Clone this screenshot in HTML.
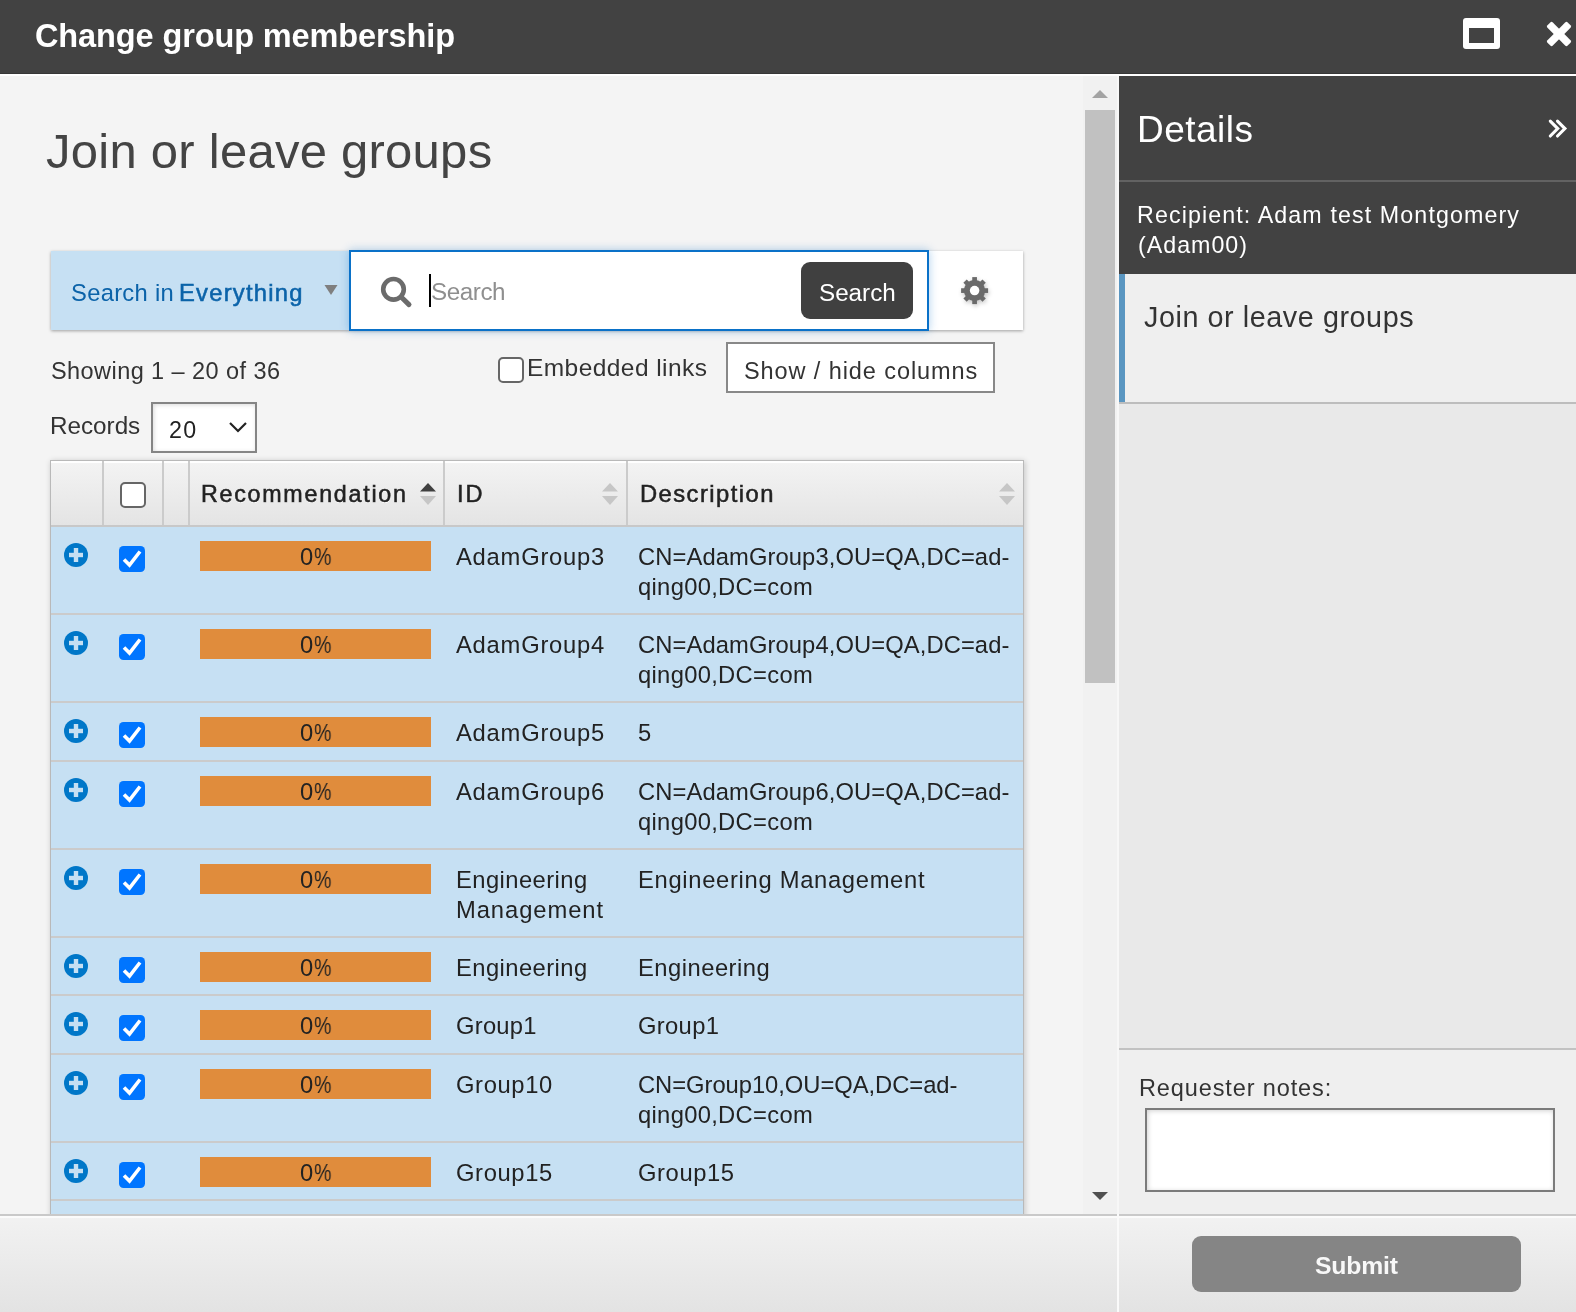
<!DOCTYPE html>
<html><head><meta charset="utf-8"><style>
*{box-sizing:border-box;margin:0;padding:0}
html,body{width:1576px;height:1312px;overflow:hidden;background:#f4f4f4;font-family:'Liberation Sans', sans-serif}
.a{position:absolute}
.tx{position:absolute;white-space:nowrap;font-family:'Liberation Sans', sans-serif;will-change:transform}
.rowt{font-size:23.75px;line-height:24px;color:#222;letter-spacing:0.000px}
</style></head><body>
<div class="a" style="left:0;top:0;width:1576px;height:74px;background:#424242"></div>
<div class="a" style="left:0;top:73px;width:1576px;height:1px;background:#373737"></div>
<div class="a" style="left:0;top:74px;width:1576px;height:2px;background:#ffffff"></div>
<div class="a" style="left:1463px;top:18px;width:37px;height:31px;border-radius:3px;background:#fff"></div>
<div class="a" style="left:1469px;top:28px;width:25px;height:15px;background:#424242"></div>
<svg class="a" style="left:1539.4px;top:14.0px" width="40" height="40" viewBox="0 0 40 40"><g transform="translate(20 20)" fill="#fff"><rect x="-14.3" y="-3.8" width="28.6" height="7.6" rx="1.8" transform="rotate(45)"/><rect x="-14.3" y="-3.8" width="28.6" height="7.6" rx="1.8" transform="rotate(-45)"/></g></svg>
<div class="a" style="left:51px;top:251px;width:972px;height:79px;background:#fff;box-shadow:0 1px 3px rgba(0,0,0,0.35)"></div>
<div class="a" style="left:51px;top:251px;width:298px;height:79px;background:#c6e0f3"></div>
<svg class="a" style="left:324px;top:285px" width="14" height="10" viewBox="0 0 14 10"><path d="M0.5 0 L13.5 0 L7 10 Z" fill="#7f7f7f"/></svg>
<div class="a" style="left:349px;top:250px;width:580px;height:81px;background:#fff;border:2px solid #0a71c8;box-shadow:0 0 9px rgba(10,110,200,0.32)"></div>
<svg class="a" style="left:378px;top:274px" width="36" height="36" viewBox="0 0 36 36"><circle cx="15.5" cy="15.3" r="10.3" fill="none" stroke="#6b6b6b" stroke-width="4.6"/><path d="M23.2 23 L31 30.6" stroke="#6b6b6b" stroke-width="5" stroke-linecap="round"/></svg>
<div class="a" style="left:429px;top:274px;width:2px;height:33px;background:#000"></div>
<div class="a" style="left:801px;top:262px;width:112px;height:57px;border-radius:9px;background:#404040"></div>
<svg class="a" style="left:958px;top:274px;filter:drop-shadow(1px 2px 2px rgba(0,0,0,0.22))" width="34" height="34" viewBox="0 0 34 34"><g transform="translate(16.6 16.6)" fill="#6a6a6a"><rect x="-2.35" y="-13.5" width="4.7" height="7" transform="rotate(0)"/><rect x="-2.35" y="-13.5" width="4.7" height="7" transform="rotate(45)"/><rect x="-2.35" y="-13.5" width="4.7" height="7" transform="rotate(90)"/><rect x="-2.35" y="-13.5" width="4.7" height="7" transform="rotate(135)"/><rect x="-2.35" y="-13.5" width="4.7" height="7" transform="rotate(180)"/><rect x="-2.35" y="-13.5" width="4.7" height="7" transform="rotate(225)"/><rect x="-2.35" y="-13.5" width="4.7" height="7" transform="rotate(270)"/><rect x="-2.35" y="-13.5" width="4.7" height="7" transform="rotate(315)"/><circle r="10.6"/><circle r="4.75" fill="#fff"/></g></svg>
<div class="a" style="left:498px;top:357px;width:26px;height:26px;border:2px solid #666;border-radius:5px;background:#fff"></div>
<div class="a" style="left:726px;top:342px;width:269px;height:51px;border:2px solid #888;background:#fff"></div>
<div class="a" style="left:151px;top:402px;width:106px;height:51px;border:2px solid #858585;background:#fff;box-shadow:inset 1px 1px 4px rgba(0,0,0,0.15)"></div>
<svg class="a" style="left:228px;top:421px" width="20" height="12" viewBox="0 0 20 12"><path d="M2 2 L10 10 L18 2" fill="none" stroke="#222" stroke-width="2.2"/></svg>
<div class="a" style="left:50px;top:460px;width:974px;height:760px;box-shadow:1px 1px 6px rgba(0,0,0,0.2);background:#c6e0f3;border:1px solid #b9b9b9;border-bottom:none"></div>
<div class="a" style="left:51px;top:461px;width:972px;height:64px;background:linear-gradient(#f3f3f3,#e4e4e4);border-top:2px solid #fff"></div>
<div class="a" style="left:51px;top:525px;width:972px;height:2px;background:#c8c8c8"></div>
<div class="a" style="left:102px;top:461px;width:2px;height:64px;background:#cbcbcb"></div>
<div class="a" style="left:162px;top:461px;width:2px;height:64px;background:#cbcbcb"></div>
<div class="a" style="left:188px;top:461px;width:2px;height:64px;background:#cbcbcb"></div>
<div class="a" style="left:443px;top:461px;width:2px;height:64px;background:#cbcbcb"></div>
<div class="a" style="left:626px;top:461px;width:2px;height:64px;background:#cbcbcb"></div>
<div class="a" style="left:120px;top:482px;width:26px;height:26px;border:2px solid #666;border-radius:5px;background:#fff"></div>
<svg class="a" style="left:419.5px;top:483px" width="16" height="22" viewBox="0 0 16 22"><path d="M0 8.5 L8 0 L16 8.5 Z" fill="#404040"/><path d="M0 13 L16 13 L8 22 Z" fill="#c6c6c6"/></svg>
<svg class="a" style="left:601.5px;top:483px" width="16" height="22" viewBox="0 0 16 22"><path d="M0 8.5 L8 0 L16 8.5 Z" fill="#c6c6c6"/><path d="M0 13 L16 13 L8 22 Z" fill="#c6c6c6"/></svg>
<svg class="a" style="left:998.5px;top:483px" width="16" height="22" viewBox="0 0 16 22"><path d="M0 8.5 L8 0 L16 8.5 Z" fill="#c6c6c6"/><path d="M0 13 L16 13 L8 22 Z" fill="#c6c6c6"/></svg>
<div class="a" style="left:51px;top:613px;width:972px;height:2px;background:#cbcbcb"></div>
<svg class="a" style="left:64px;top:543px" width="24" height="24" viewBox="0 0 24 24"><circle cx="12" cy="12" r="12" fill="#0077c8"/><rect x="5" y="9.8" width="14" height="4.4" fill="#c6e0f3"/><rect x="9.8" y="5" width="4.4" height="14" fill="#c6e0f3"/></svg>
<svg class="a" style="left:119px;top:546px" width="26" height="26" viewBox="0 0 26 26"><rect x="0" y="0" width="26" height="26" rx="4.5" fill="#0075ff"/><path d="M5 13.5 L10.5 19 L21 5.5" fill="none" stroke="#fff" stroke-width="3.6"/></svg>
<div class="a" style="left:200px;top:541px;width:231px;height:30px;background:#e08c3c"></div>
<div id="r_pct0" class="tx rowt" style="left:300.10px;top:544.80px;letter-spacing:0.000px">0</div>
<div class="tx rowt" style="left:313.80px;top:544.80px;transform:scaleX(0.823);transform-origin:0 0">%</div>
<div id="r_id0" class="tx rowt" style="left:456.30px;top:544.80px;letter-spacing:0.783px">AdamGroup3</div>
<div id="r_desc0" class="tx rowt" style="left:638.30px;top:544.80px;letter-spacing:0.098px">CN=AdamGroup3,OU=QA,DC=ad-</div>
<div class="tx rowt" style="left:638.30px;top:574.80px;letter-spacing:0.313px">qing00,DC=com</div>
<div class="a" style="left:51px;top:701px;width:972px;height:2px;background:#cbcbcb"></div>
<svg class="a" style="left:64px;top:631px" width="24" height="24" viewBox="0 0 24 24"><circle cx="12" cy="12" r="12" fill="#0077c8"/><rect x="5" y="9.8" width="14" height="4.4" fill="#c6e0f3"/><rect x="9.8" y="5" width="4.4" height="14" fill="#c6e0f3"/></svg>
<svg class="a" style="left:119px;top:634px" width="26" height="26" viewBox="0 0 26 26"><rect x="0" y="0" width="26" height="26" rx="4.5" fill="#0075ff"/><path d="M5 13.5 L10.5 19 L21 5.5" fill="none" stroke="#fff" stroke-width="3.6"/></svg>
<div class="a" style="left:200px;top:629px;width:231px;height:30px;background:#e08c3c"></div>
<div class="tx rowt" style="left:300.10px;top:632.80px;letter-spacing:0.000px">0</div>
<div class="tx rowt" style="left:313.80px;top:632.80px;transform:scaleX(0.823);transform-origin:0 0">%</div>
<div class="tx rowt" style="left:456.30px;top:632.80px;letter-spacing:0.783px">AdamGroup4</div>
<div class="tx rowt" style="left:638.30px;top:632.80px;letter-spacing:0.098px">CN=AdamGroup4,OU=QA,DC=ad-</div>
<div class="tx rowt" style="left:638.30px;top:662.80px;letter-spacing:0.313px">qing00,DC=com</div>
<div class="a" style="left:51px;top:760px;width:972px;height:2px;background:#cbcbcb"></div>
<svg class="a" style="left:64px;top:719px" width="24" height="24" viewBox="0 0 24 24"><circle cx="12" cy="12" r="12" fill="#0077c8"/><rect x="5" y="9.8" width="14" height="4.4" fill="#c6e0f3"/><rect x="9.8" y="5" width="4.4" height="14" fill="#c6e0f3"/></svg>
<svg class="a" style="left:119px;top:722px" width="26" height="26" viewBox="0 0 26 26"><rect x="0" y="0" width="26" height="26" rx="4.5" fill="#0075ff"/><path d="M5 13.5 L10.5 19 L21 5.5" fill="none" stroke="#fff" stroke-width="3.6"/></svg>
<div class="a" style="left:200px;top:717px;width:231px;height:30px;background:#e08c3c"></div>
<div class="tx rowt" style="left:300.10px;top:720.80px;letter-spacing:0.000px">0</div>
<div class="tx rowt" style="left:313.80px;top:720.80px;transform:scaleX(0.823);transform-origin:0 0">%</div>
<div class="tx rowt" style="left:456.30px;top:720.80px;letter-spacing:0.783px">AdamGroup5</div>
<div class="tx rowt" style="left:638.30px;top:720.80px;letter-spacing:0.000px">5</div>
<div class="a" style="left:51px;top:848px;width:972px;height:2px;background:#cbcbcb"></div>
<svg class="a" style="left:64px;top:778px" width="24" height="24" viewBox="0 0 24 24"><circle cx="12" cy="12" r="12" fill="#0077c8"/><rect x="5" y="9.8" width="14" height="4.4" fill="#c6e0f3"/><rect x="9.8" y="5" width="4.4" height="14" fill="#c6e0f3"/></svg>
<svg class="a" style="left:119px;top:781px" width="26" height="26" viewBox="0 0 26 26"><rect x="0" y="0" width="26" height="26" rx="4.5" fill="#0075ff"/><path d="M5 13.5 L10.5 19 L21 5.5" fill="none" stroke="#fff" stroke-width="3.6"/></svg>
<div class="a" style="left:200px;top:776px;width:231px;height:30px;background:#e08c3c"></div>
<div class="tx rowt" style="left:300.10px;top:779.80px;letter-spacing:0.000px">0</div>
<div class="tx rowt" style="left:313.80px;top:779.80px;transform:scaleX(0.823);transform-origin:0 0">%</div>
<div class="tx rowt" style="left:456.30px;top:779.80px;letter-spacing:0.783px">AdamGroup6</div>
<div class="tx rowt" style="left:638.30px;top:779.80px;letter-spacing:0.098px">CN=AdamGroup6,OU=QA,DC=ad-</div>
<div class="tx rowt" style="left:638.30px;top:809.80px;letter-spacing:0.313px">qing00,DC=com</div>
<div class="a" style="left:51px;top:936px;width:972px;height:2px;background:#cbcbcb"></div>
<svg class="a" style="left:64px;top:866px" width="24" height="24" viewBox="0 0 24 24"><circle cx="12" cy="12" r="12" fill="#0077c8"/><rect x="5" y="9.8" width="14" height="4.4" fill="#c6e0f3"/><rect x="9.8" y="5" width="4.4" height="14" fill="#c6e0f3"/></svg>
<svg class="a" style="left:119px;top:869px" width="26" height="26" viewBox="0 0 26 26"><rect x="0" y="0" width="26" height="26" rx="4.5" fill="#0075ff"/><path d="M5 13.5 L10.5 19 L21 5.5" fill="none" stroke="#fff" stroke-width="3.6"/></svg>
<div class="a" style="left:200px;top:864px;width:231px;height:30px;background:#e08c3c"></div>
<div class="tx rowt" style="left:300.10px;top:867.80px;letter-spacing:0.000px">0</div>
<div class="tx rowt" style="left:313.80px;top:867.80px;transform:scaleX(0.823);transform-origin:0 0">%</div>
<div class="tx rowt" style="left:456.30px;top:867.80px;letter-spacing:0.443px">Engineering</div>
<div class="tx rowt" style="left:456.30px;top:897.80px;letter-spacing:0.940px">Management</div>
<div class="tx rowt" style="left:638.30px;top:867.80px;letter-spacing:0.691px">Engineering Management</div>
<div class="a" style="left:51px;top:994px;width:972px;height:2px;background:#cbcbcb"></div>
<svg class="a" style="left:64px;top:954px" width="24" height="24" viewBox="0 0 24 24"><circle cx="12" cy="12" r="12" fill="#0077c8"/><rect x="5" y="9.8" width="14" height="4.4" fill="#c6e0f3"/><rect x="9.8" y="5" width="4.4" height="14" fill="#c6e0f3"/></svg>
<svg class="a" style="left:119px;top:957px" width="26" height="26" viewBox="0 0 26 26"><rect x="0" y="0" width="26" height="26" rx="4.5" fill="#0075ff"/><path d="M5 13.5 L10.5 19 L21 5.5" fill="none" stroke="#fff" stroke-width="3.6"/></svg>
<div class="a" style="left:200px;top:952px;width:231px;height:30px;background:#e08c3c"></div>
<div class="tx rowt" style="left:300.10px;top:955.80px;letter-spacing:0.000px">0</div>
<div class="tx rowt" style="left:313.80px;top:955.80px;transform:scaleX(0.823);transform-origin:0 0">%</div>
<div class="tx rowt" style="left:456.30px;top:955.80px;letter-spacing:0.443px">Engineering</div>
<div class="tx rowt" style="left:638.30px;top:955.80px;letter-spacing:0.493px">Engineering</div>
<div class="a" style="left:51px;top:1053px;width:972px;height:2px;background:#cbcbcb"></div>
<svg class="a" style="left:64px;top:1012px" width="24" height="24" viewBox="0 0 24 24"><circle cx="12" cy="12" r="12" fill="#0077c8"/><rect x="5" y="9.8" width="14" height="4.4" fill="#c6e0f3"/><rect x="9.8" y="5" width="4.4" height="14" fill="#c6e0f3"/></svg>
<svg class="a" style="left:119px;top:1015px" width="26" height="26" viewBox="0 0 26 26"><rect x="0" y="0" width="26" height="26" rx="4.5" fill="#0075ff"/><path d="M5 13.5 L10.5 19 L21 5.5" fill="none" stroke="#fff" stroke-width="3.6"/></svg>
<div class="a" style="left:200px;top:1010px;width:231px;height:30px;background:#e08c3c"></div>
<div class="tx rowt" style="left:300.10px;top:1013.80px;letter-spacing:0.000px">0</div>
<div class="tx rowt" style="left:313.80px;top:1013.80px;transform:scaleX(0.823);transform-origin:0 0">%</div>
<div class="tx rowt" style="left:456.30px;top:1013.80px;letter-spacing:0.259px">Group1</div>
<div class="tx rowt" style="left:638.30px;top:1013.80px;letter-spacing:0.339px">Group1</div>
<div class="a" style="left:51px;top:1141px;width:972px;height:2px;background:#cbcbcb"></div>
<svg class="a" style="left:64px;top:1071px" width="24" height="24" viewBox="0 0 24 24"><circle cx="12" cy="12" r="12" fill="#0077c8"/><rect x="5" y="9.8" width="14" height="4.4" fill="#c6e0f3"/><rect x="9.8" y="5" width="4.4" height="14" fill="#c6e0f3"/></svg>
<svg class="a" style="left:119px;top:1074px" width="26" height="26" viewBox="0 0 26 26"><rect x="0" y="0" width="26" height="26" rx="4.5" fill="#0075ff"/><path d="M5 13.5 L10.5 19 L21 5.5" fill="none" stroke="#fff" stroke-width="3.6"/></svg>
<div class="a" style="left:200px;top:1069px;width:231px;height:30px;background:#e08c3c"></div>
<div class="tx rowt" style="left:300.10px;top:1072.80px;letter-spacing:0.000px">0</div>
<div class="tx rowt" style="left:313.80px;top:1072.80px;transform:scaleX(0.823);transform-origin:0 0">%</div>
<div class="tx rowt" style="left:456.30px;top:1072.80px;letter-spacing:0.642px">Group10</div>
<div class="tx rowt" style="left:638.30px;top:1072.80px;letter-spacing:-0.031px">CN=Group10,OU=QA,DC=ad-</div>
<div class="tx rowt" style="left:638.30px;top:1102.80px;letter-spacing:0.313px">qing00,DC=com</div>
<div class="a" style="left:51px;top:1199px;width:972px;height:2px;background:#cbcbcb"></div>
<svg class="a" style="left:64px;top:1159px" width="24" height="24" viewBox="0 0 24 24"><circle cx="12" cy="12" r="12" fill="#0077c8"/><rect x="5" y="9.8" width="14" height="4.4" fill="#c6e0f3"/><rect x="9.8" y="5" width="4.4" height="14" fill="#c6e0f3"/></svg>
<svg class="a" style="left:119px;top:1162px" width="26" height="26" viewBox="0 0 26 26"><rect x="0" y="0" width="26" height="26" rx="4.5" fill="#0075ff"/><path d="M5 13.5 L10.5 19 L21 5.5" fill="none" stroke="#fff" stroke-width="3.6"/></svg>
<div class="a" style="left:200px;top:1157px;width:231px;height:30px;background:#e08c3c"></div>
<div class="tx rowt" style="left:300.10px;top:1160.80px;letter-spacing:0.000px">0</div>
<div class="tx rowt" style="left:313.80px;top:1160.80px;transform:scaleX(0.823);transform-origin:0 0">%</div>
<div class="tx rowt" style="left:456.30px;top:1160.80px;letter-spacing:0.642px">Group15</div>
<div class="tx rowt" style="left:638.30px;top:1160.80px;letter-spacing:0.609px">Group15</div>
<div class="a" style="left:51px;top:1201px;width:972px;height:60px;background:#c6e0f3"></div>
<div class="a" style="left:1083px;top:76px;width:34px;height:1138px;background:#f1f1f1"></div>
<div class="a" style="left:1085px;top:110px;width:30px;height:573px;background:#c1c1c1"></div>
<svg class="a" style="left:1092px;top:90px" width="16" height="8" viewBox="0 0 16 8"><path d="M0 8 L8 0 L16 8Z" fill="#a3a3a3"/></svg>
<svg class="a" style="left:1092px;top:1192px" width="16" height="8" viewBox="0 0 16 8"><path d="M0 0 L16 0 L8 8Z" fill="#505050"/></svg>
<div class="a" style="left:1117px;top:76px;width:2px;height:1138px;background:#f7f7f7"></div>
<div class="a" style="left:1119px;top:76px;width:457px;height:1138px;background:#e9e9e9"></div>
<div class="a" style="left:1119px;top:76px;width:457px;height:198px;background:#424242"></div>
<div class="a" style="left:1119px;top:180px;width:457px;height:2px;background:#626262"></div>
<svg class="a" style="left:1540px;top:110px" width="36" height="36" viewBox="1540 110 36 36"><path d="M1550.3 121.2 L1557.7 128.6 L1550.3 136 M1557.5 121.2 L1564.9 128.6 L1557.5 136" fill="none" stroke="#fff" stroke-width="3.1" stroke-linecap="round"/></svg>
<div class="a" style="left:1119px;top:274px;width:457px;height:128px;background:#efefef"></div>
<div class="a" style="left:1119px;top:274px;width:6px;height:130px;background:#5a96c1"></div>
<div class="a" style="left:1119px;top:402px;width:457px;height:2px;background:#bdbdbd"></div>
<div class="a" style="left:1119px;top:1048px;width:457px;height:2px;background:#c2c2c2"></div>
<div class="a" style="left:1119px;top:1050px;width:457px;height:164px;background:#efefef"></div>
<div class="a" style="left:1145px;top:1108px;width:410px;height:84px;border:2px solid #7b7b7b;background:#fff;box-shadow:inset 1px 1px 5px rgba(0,0,0,0.18)"></div>
<div class="a" style="left:0;top:1214px;width:1576px;height:98px;background:linear-gradient(#f2f2f2,#e3e3e3)"></div>
<div class="a" style="left:0;top:1214px;width:1576px;height:2px;background:#c9c9c9"></div>
<div class="a" style="left:0;top:1216px;width:1576px;height:2px;background:#fbfbfb"></div>
<div class="a" style="left:1117px;top:1214px;width:2px;height:98px;background:#fafafa"></div>
<div class="a" style="left:1192px;top:1236px;width:329px;height:56px;border-radius:9px;background:#858585"></div>
<div id="t_title" class="tx" style="left:35.00px;top:20.40px;font-size:32.5px;line-height:33px;font-weight:700;color:#ffffff;letter-spacing:-0.113px;">Change group membership</div>
<div id="t_h1" class="tx" style="left:45.90px;top:127.40px;font-size:49.0px;line-height:49px;font-weight:400;color:#444444;letter-spacing:0.256px;">Join or leave groups</div>
<div id="t_srchin" class="tx" style="left:71.00px;top:280.60px;font-size:23.75px;line-height:24px;font-weight:400;color:#0b63a9;letter-spacing:0.295px;">Search in</div>
<div id="t_every" class="tx" style="left:179.40px;top:280.60px;font-size:23.75px;line-height:24px;font-weight:400;color:#0b63a9;letter-spacing:1.242px;-webkit-text-stroke:0.55px #0b63a9;">Everything</div>
<div id="t_ph" class="tx" style="left:430.50px;top:279.20px;font-size:24.25px;line-height:25px;font-weight:400;color:#8f8f8f;letter-spacing:-0.462px;">Search</div>
<div id="t_btn" class="tx" style="left:818.80px;top:280.40px;font-size:24.25px;line-height:25px;font-weight:400;color:#ffffff;letter-spacing:-0.022px;">Search</div>
<div id="t_showing" class="tx" style="left:51.00px;top:359.20px;font-size:23.5px;line-height:24px;font-weight:400;color:#333333;letter-spacing:0.429px;">Showing 1 – 20 of 36</div>
<div id="t_records" class="tx" style="left:50.20px;top:413.40px;font-size:24.25px;line-height:25px;font-weight:400;color:#333333;letter-spacing:-0.012px;">Records</div>
<div id="t_sel" class="tx" style="left:169.00px;top:417.70px;font-size:23.25px;line-height:24px;font-weight:400;color:#222222;letter-spacing:1.334px;">20</div>
<div id="t_emb" class="tx" style="left:526.60px;top:354.50px;font-size:24.5px;line-height:25px;font-weight:400;color:#333333;letter-spacing:0.437px;">Embedded links</div>
<div id="t_shc" class="tx" style="left:743.80px;top:359.40px;font-size:23.5px;line-height:24px;font-weight:400;color:#333333;letter-spacing:0.909px;">Show / hide columns</div>
<div id="t_hrec" class="tx" style="left:201.20px;top:482.20px;font-size:23.25px;line-height:24px;font-weight:400;color:#222222;letter-spacing:1.744px;-webkit-text-stroke:0.55px #222222;text-shadow:0 1px 0 #fff;">Recommendation</div>
<div id="t_hid" class="tx" style="left:457.00px;top:481.80px;font-size:23.5px;line-height:24px;font-weight:400;color:#222222;letter-spacing:2.000px;-webkit-text-stroke:0.55px #222222;text-shadow:0 1px 0 #fff;">ID</div>
<div id="t_hdesc" class="tx" style="left:639.60px;top:482.00px;font-size:23.75px;line-height:24px;font-weight:400;color:#222222;letter-spacing:1.459px;-webkit-text-stroke:0.55px #222222;text-shadow:0 1px 0 #fff;">Description</div>
<div id="t_details" class="tx" style="left:1137.10px;top:111.00px;font-size:37.0px;line-height:37px;font-weight:400;color:#ffffff;letter-spacing:0.479px;">Details</div>
<div id="t_recip1" class="tx" style="left:1137.00px;top:202.60px;font-size:23.25px;line-height:24px;font-weight:400;color:#ffffff;letter-spacing:1.103px;">Recipient: Adam test Montgomery</div>
<div id="t_recip2" class="tx" style="left:1138.00px;top:232.60px;font-size:23.25px;line-height:24px;font-weight:400;color:#ffffff;letter-spacing:0.990px;">(Adam00)</div>
<div id="t_jlg" class="tx" style="left:1144.00px;top:302.60px;font-size:28.75px;line-height:29px;font-weight:400;color:#333333;letter-spacing:0.563px;">Join or leave groups</div>
<div id="t_notes" class="tx" style="left:1139.00px;top:1076.20px;font-size:23.5px;line-height:24px;font-weight:400;color:#333333;letter-spacing:0.883px;">Requester notes:</div>
<div id="t_submit" class="tx" style="left:1315.10px;top:1253.40px;font-size:24.75px;line-height:25px;font-weight:700;color:#f8f8f8;letter-spacing:-0.181px;">Submit</div>
</body></html>
